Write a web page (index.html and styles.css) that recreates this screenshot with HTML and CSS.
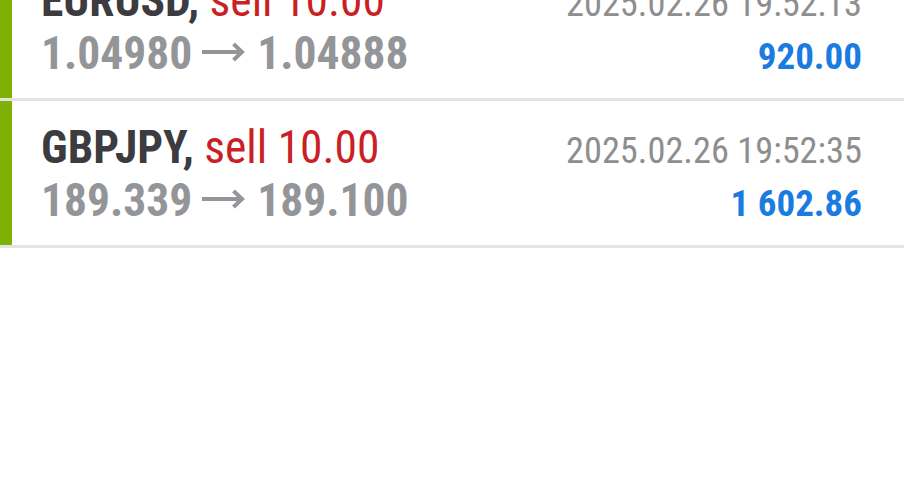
FILE: index.html
```html
<!DOCTYPE html>
<html lang="en">

<head>
    <meta charset="UTF-8">
    <meta name="viewport" content="width=device-width, initial-scale=1.0">
    <title>History</title>
    <link rel="stylesheet" href="styles.css">
</head>

<body>
    <div class="deals">
        <div class="deal">
            <div class="mark"></div>
            <div class="info">
                <div class="line">
                    <span class="title"><b class="symbol">EURUSD,</b> <span class="sell">sell 10.00</span></span>
                    <span class="time">2025.02.26 19:52:13</span>
                </div>
                <div class="line">
                    <span class="prices">1.04980<svg class="arrow" viewBox="0 0 43 20"><path d="M0 10H40M31.5 2L40 10L31.5 18" /></svg>1.04888</span>
                    <span class="profit">920.00</span>
                </div>
            </div>
        </div>

        <div class="deal">
            <div class="mark"></div>
            <div class="info">
                <div class="line">
                    <span class="title"><b class="symbol">GBPJPY,</b> <span class="sell">sell 10.00</span></span>
                    <span class="time">2025.02.26 19:52:35</span>
                </div>
                <div class="line">
                    <span class="prices">189.339<svg class="arrow" viewBox="0 0 43 20"><path d="M0 10H40M31.5 2L40 10L31.5 18" /></svg>189.100</span>
                    <span class="profit">1 602.86</span>
                </div>
            </div>
        </div>
    </div>
</body>

</html>
```
FILE: styles.css
```css
body {
    margin: 0;
    background-color: #fff;
    font-family: "Roboto Condensed", Roboto, sans-serif;
}

/* list is scrolled, first row is partly hidden */
.deals {
    margin-top: -46px;
}

.deal {
    display: flex;
    border-bottom: 3px solid #e3e3e3;
}

.mark {
    width: 12px;
    flex-shrink: 0;
    background-color: #7fb005;
}

.info {
    flex: 1;
    padding: 20px 42px 18px 29px;
}

.line {
    display: flex;
    justify-content: space-between;
    align-items: baseline;
    height: 53px;
    line-height: 53px;
}

.title,
.prices {
    font-size: 45.5px;
}

.symbol {
    font-weight: 700;
    color: #3b3b40;
}

.sell {
    color: #c91f25;
}

.prices {
    font-weight: 700;
    color: #939598;
}

.arrow {
    width: 43px;
    height: 20px;
    margin: 0 12px 0 10px;
    vertical-align: 7px;
    fill: none;
    stroke: #939598;
    stroke-width: 4;
}

.time {
    font-size: 36.4px;
    color: #8e8e8e;
}

.profit {
    font-size: 37px;
    font-weight: 700;
    color: #1a7be0;
}
```
